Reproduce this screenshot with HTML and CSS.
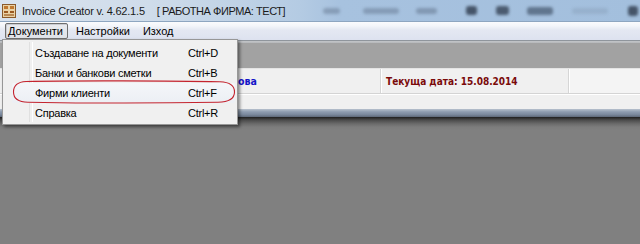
FILE: index.html
```html
<!DOCTYPE html>
<html lang="bg">
<head>
<meta charset="utf-8">
<title>Invoice Creator</title>
<link rel="stylesheet" href="styles.css">
</head>
<body>
<div class="screen">
  <header class="titlebar">
    <svg class="app-icon" width="14" height="14" viewBox="0 0 14 14">
      <rect x="0.5" y="0.5" width="13" height="13" fill="#e9d2a6" stroke="#8a5a2b"/>
      <rect x="2" y="2" width="4" height="3" fill="#c0782e"/>
      <rect x="8" y="2" width="4" height="3" fill="#c0782e"/>
      <rect x="2" y="7" width="4" height="2" fill="#9b5a22"/>
      <rect x="8" y="7" width="4" height="2" fill="#9b5a22"/>
      <rect x="2" y="10" width="10" height="2" fill="#b98a55"/>
    </svg>
    <span class="title">Invoice Creator v. 4.62.1.5</span>
    <span class="firm">[ РАБОТНА ФИРМА: ТЕСТ]</span>
    <div class="ghost">
      <span class="g g1"></span>
      <span class="g g2"></span>
      <span class="g g3"></span>
      <span class="g g4"></span>
      <span class="g g5"></span>
      <span class="g g6"></span>
      <span class="g g7"></span>
      <span class="g g8"></span>
    </div>
  </header>
  <nav class="menubar">
    <span class="mi active">Документи</span>
    <span class="mi">Настройки</span>
    <span class="mi">Изход</span>
  </nav>
  <div class="menubar-edge"></div>
  <div class="toolbar-gap"></div>
  <div class="status">
    <div class="panel p1"><span class="user">ова</span></div>
    <div class="panel p2"><span class="date">Текуща дата: 15.08.2014</span></div>
    <div class="panel p3"></div>
  </div>
  <div class="strip"></div>
  <div class="framebar"></div>
  <main class="mdi"></main>

  <div class="dropdown">
    <div class="row"><span class="label">Създаване на документи</span><span class="key">Ctrl+D</span></div>
    <div class="row"><span class="label">Банки и банкови сметки</span><span class="key">Ctrl+B</span></div>
    <div class="row hl"><span class="label">Фирми клиенти</span><span class="key">Ctrl+F</span></div>
    <div class="row"><span class="label">Справка</span><span class="key">Ctrl+R</span></div>
    <svg class="mark" width="224" height="24" viewBox="0 0 224 24">
      <path d="M14 1.5 C60 0.5 160 0.8 208 1.8 C219 2.2 222.5 6 222.5 12 C222.5 18.5 218 22 206 22.3 C150 23.2 60 23 16 22.2 C5 22 1.5 18 1.5 12 C1.5 6 5 2 14 1.5 Z" fill="none" stroke="#c4242f" stroke-width="1.1"/>
    </svg>
  </div>
</div>
</body>
</html>
```

FILE: styles.css
```css
* { box-sizing: border-box; }

html, body {
  margin: 0;
  padding: 0;
}

body {
  width: 640px;
  height: 244px;
  overflow: hidden;
  background: #808080;
  font-family: "Liberation Sans", Arial, sans-serif;
}

.screen {
  position: relative;
  width: 640px;
  height: 244px;
  display: flex;
  flex-direction: column;
}

/* ---------- title bar ---------- */
.titlebar {
  height: 22px;
  flex: none;
  display: flex;
  align-items: center;
  padding-left: 2px;
  background: linear-gradient(90deg, #d9e3ee 0, #cfdcea 150px, #b4cbe3 300px, #a7c2df 340px, #a3bfdd 100%);
  border-bottom: 1px solid #8ea6c0;
  color: #1a1a1a;
  font-size: 11px;
}

.app-icon {
  flex: none;
  margin-top: 1px;
}

.title {
  margin-left: 6px;
  white-space: nowrap;
  letter-spacing: -0.2px;
}

.firm {
  margin-left: 12px;
  white-space: nowrap;
  letter-spacing: -0.45px;
}

.ghost {
  margin-left: auto;
  width: 317px;
  height: 22px;
  display: flex;
  align-items: center;
  filter: blur(1.6px);
}

.g {
  display: block;
  height: 6px;
  border-radius: 3px;
  background: #5d6f87;
  flex: none;
}
.g1 { width: 17px; opacity: .45; }
.g2 { width: 36px; margin-left: 23px; opacity: .45; }
.g3 { width: 21px; margin-left: 17px; opacity: .5; }
.g4 { width: 11px; height: 9px; margin-left: 29px; background: #2d3a4b; opacity: .8; }
.g5 { width: 13px; height: 9px; margin-left: 19px; background: #2d3a4b; opacity: .75; }
.g6 { width: 26px; height: 8px; margin-left: 18px; background: #34445a; opacity: .6; }
.g7 { width: 36px; margin-left: 19px; opacity: .18; }
.g8 { width: 10px; height: 10px; margin-left: 20px; background: #2d3a4b; opacity: .8; }

/* ---------- menu bar ---------- */
.menubar {
  height: 18px;
  flex: none;
  display: flex;
  align-items: center;
  padding-left: 5px;
  background: linear-gradient(#fafbfd 0, #f4f6fa 20%, #e4e8f2 45%, #dde2ef 100%);
  font-size: 11px;
  color: #000;
}

.mi {
  height: 16px;
  line-height: 14px;
  padding: 0 4px 0 2px;
  border: 1px solid transparent;
  margin-right: 5px;
  white-space: nowrap;
}

.mi.active {
  border-color: #6f6f6f;
  border-radius: 2px;
  background: linear-gradient(#e9ebef, #dfe2e8);
  box-shadow: inset 1px 1px 0 #c9ccd2;
}

.menubar-edge {
  height: 3px;
  flex: none;
  background: linear-gradient(#8f959c 0, #8f959c 33%, #c3c6c9 33%, #b5b7b9 100%);
}

.toolbar-gap {
  height: 25px;
  flex: none;
  background: #a2a2a2;
}

/* ---------- status panels ---------- */
.status {
  height: 25px;
  flex: none;
  display: flex;
  background: #f0f0f0;
  border-top: 1px solid #e4e4e4;
  font-family: "DejaVu Sans Condensed", "DejaVu Sans", sans-serif;
  font-size: 10px;
  font-weight: bold;
}

.panel {
  display: flex;
  align-items: center;
  white-space: nowrap;
}

.p1 {
  width: 380px;
  padding-left: 238px;
}
.p2 {
  width: 188px;
  padding-left: 5px;
  border-left: 1px solid #d6d6d6;
  box-shadow: inset 1px 0 0 #ffffff;
}
.p3 {
  flex: 1;
  border-left: 1px solid #d6d6d6;
  box-shadow: inset 1px 0 0 #ffffff;
  background: #f4f4f4;
}

.user {
  color: #1515c8;
  font-size: 10.5px;
}

.date {
  color: #7a0a0a;
}

.strip {
  height: 16px;
  flex: none;
  background: #f0f0f0;
  border-top: 1px solid #d4d4d4;
  box-shadow: inset 0 1px 0 #ffffff;
}

.framebar {
  height: 8px;
  flex: none;
  background: linear-gradient(#b7c1cd 0, #8e9cb0 35%, #7a889c 70%, #5d6878 100%);
}

.mdi {
  flex: 1;
  background: linear-gradient(#1f1f1f 0, #4a4a4a 3px, #6c6c6c 7px, #7c7c7c 10px, #808080 13px);
}

/* ---------- dropdown ---------- */
.dropdown {
  position: absolute;
  left: 2px;
  top: 39px;
  width: 236px;
  height: 86px;
  padding-top: 3px;
  background: #f0f0f0;
  border: 1px solid #979797;
  box-shadow: 2px 2px 3px rgba(0, 0, 0, 0.45);
  font-size: 11px;
  letter-spacing: -0.25px;
  color: #000;
}

.dropdown::before {
  content: "";
  position: absolute;
  left: 26px;
  top: 2px;
  bottom: 2px;
  width: 2px;
  border-left: 1px solid #e0e0e0;
  border-right: 1px solid #ffffff;
}

.row {
  position: relative;
  height: 20px;
  display: grid;
  grid-template-columns: 153px auto;
  align-items: center;
  padding-left: 32px;
  white-space: nowrap;
}

.row.hl {
  background: linear-gradient(#f4f6f9, #eceff4);
  margin: 0 2px 0 9px;
  padding-left: 23px;
  border-radius: 2px;
}

.mark {
  position: absolute;
  left: 9px;
  top: 40px;
}
```
